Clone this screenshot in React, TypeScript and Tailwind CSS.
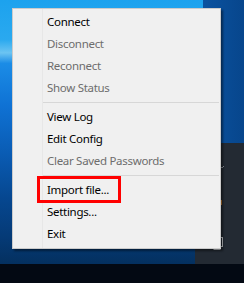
import React from 'react';

type Item = { label: string; disabled?: boolean; highlight?: boolean } | 'sep';

const items: Item[] = [
  { label: 'Connect' },
  { label: 'Disconnect', disabled: true },
  { label: 'Reconnect', disabled: true },
  { label: 'Show Status', disabled: true },
  'sep',
  { label: 'View Log' },
  { label: 'Edit Config' },
  { label: 'Clear Saved Passwords', disabled: true },
  'sep',
  { label: 'Import file...', highlight: true },
  { label: 'Settings...' },
  { label: 'Exit' },
];

export default function App() {
  return (
    <div
      className="relative w-[244px] h-[283px] overflow-hidden flex flex-col"
      style={{ fontFamily: '"Noto Sans", "Open Sans", sans-serif' }}
    >
      {/* Desktop wallpaper */}
      <div className="flex-1 bg-[linear-gradient(90deg,transparent_0,transparent_203px,#0a52a0_203px,#07468c_100%),linear-gradient(180deg,#1ca2ee_0%,#2aa9ef_15%,#6cc4f2_20%,#1b8ce6_24%,#0f72d4_40%,#0a5cb4_58%,#064790_75%,#053a76_90%,#04305f_100%)]" />

      {/* Taskbar */}
      <div className="h-[19px] bg-[#030913]" />

      {/* Window behind the menu */}
      <div className="absolute left-[195px] top-[143px] w-[49px] h-[121px] bg-[#232a33]">
        <svg className="absolute left-[24px] top-[22px]" width="6" height="5" viewBox="0 0 6 5">
          <path d="M1 1 L3 3 L5 1" stroke="#8a9099" strokeWidth="1" fill="none" />
        </svg>
        <div className="absolute left-[25px] top-[57px] w-[2px] h-[5px] bg-[#c77a2a]" />
        <svg className="absolute left-[17px] top-[94px]" width="12" height="14" viewBox="0 0 12 14">
          <rect x="0.5" y="0.5" width="10" height="9" stroke="#c9ccd0" strokeWidth="1" fill="none" />
          <path d="M5 10 V12.5 M1.5 12.5 H8.5" stroke="#c9ccd0" strokeWidth="1.2" fill="none" />
        </svg>
      </div>

      {/* Context menu */}
      <div className="absolute left-[12px] top-[8px] w-[209px] border border-[#cbcbcb] bg-[linear-gradient(90deg,#f0f0f0_29px,#e7e7e7_29px,#e7e7e7_30px,#f0f0f0_30px)] pt-[2px] pb-[3px] shadow-[2px_2px_2px_rgba(0,0,0,0.45)] text-[11.5px] tracking-[-0.3px]">
        {items.map((item, i) =>
          item === 'sep' ? (
            <div key={i} className="h-[7px] pt-[3px] pl-[30px] pr-[1px]">
              <div className="h-px bg-[#d7d7d7]" />
            </div>
          ) : (
            <div
              key={i}
              className={`relative h-[22px] leading-[22px] pl-[34px] whitespace-nowrap ${
                item.disabled ? 'text-[#6d6d6d]' : 'text-black'
              }`}
            >
              {item.label}
              {item.highlight && (
                <div className="absolute left-[24px] top-[-3px] w-[84px] h-[27px] border-[3px] border-[#ff0000]" />
              )}
            </div>
          )
        )}
      </div>
    </div>
  );
}
